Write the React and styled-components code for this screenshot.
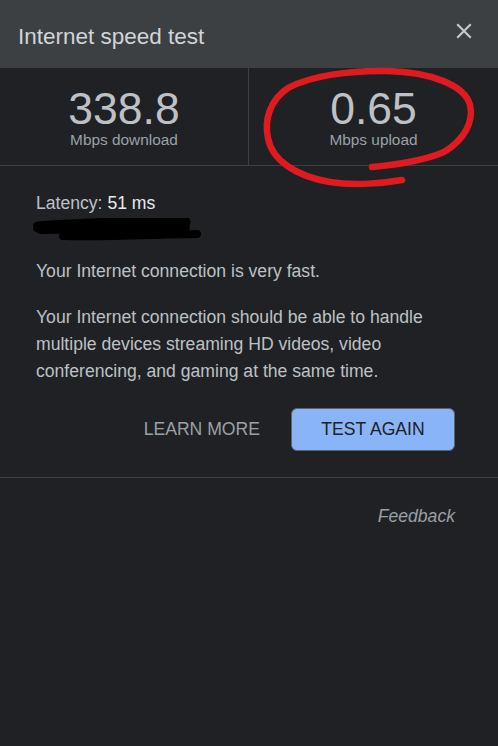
import styled, { createGlobalStyle } from "styled-components"

const GlobalStyle = createGlobalStyle`
    html, body {
        margin: 0;
        padding: 0;
        background: #202124;
    }
    body {
        font-family: "Liberation Sans", Arial, sans-serif;
    }
`
const Card = styled.div`
    position: relative;
    width: 498px;
    height: 746px;
    background: #202124;
    overflow: hidden;
`
const Header = styled.div`
    height: 68px;
    display: flex;
    align-items: center;
    justify-content: space-between;
    padding: 0 26px 0 18px;
    box-sizing: border-box;
    background: #3c4043;
`
const Title = styled.h1`
    margin: 0;
    font-size: 22.5px;
    font-weight: 400;
    color: #d2d5d9;
    padding-top: 6px;
`
const Close = styled.button`
    border: none;
    background: none;
    padding: 0;
    display: flex;
    cursor: pointer;
    margin-top: -6px;
`
const Stats = styled.div`
    display: grid;
    grid-template-columns: 248px 1fr;
    border-bottom: 1px solid #3c4043;
`
const Stat = styled.div`
    display: flex;
    flex-direction: column;
    align-items: center;
    padding: 18px 0 17px;
    border-left: ${p => p.divided ? "1px solid #3c4043" : "none"};
`
const Value = styled.span`
    font-size: 44.5px;
    line-height: 46px;
    color: #bdc1c6;
`
const Unit = styled.span`
    font-size: 15.4px;
    line-height: 16px;
    color: #9aa0a6;
`
const Body = styled.div`
    padding: 24px 36px 0;
`
const Line = styled.div`
    font-size: 17.6px;
    line-height: 26px;
    color: #bdc1c6;
    margin-top: ${p => p.gap || 0}px;
`
const Strong = styled.span`
    color: #e8eaed;
`
const Redacted = styled.div`
    height: 26px;
    display: flex;
    align-items: flex-end;
    margin-left: -3px;
`
const Paragraph = styled.p`
    margin: 20px 0 0;
    font-size: 17.6px;
    line-height: 27px;
    color: #bdc1c6;
`
const Actions = styled.div`
    display: flex;
    justify-content: flex-end;
    align-items: center;
    gap: 15px;
    margin-top: 23px;
    padding-right: 7px;
`
const TextButton = styled.button`
    border: none;
    background: none;
    font-family: inherit;
    font-size: 17.6px;
    color: #9aa0a6;
    padding: 0 16px;
    height: 42px;
    cursor: pointer;
`
const PrimaryButton = styled.button`
    border: 1px solid #5f6368;
    border-radius: 6px;
    background: #8ab4f8;
    font-family: inherit;
    font-size: 17.6px;
    color: #202124;
    height: 43px;
    width: 164px;
    cursor: pointer;
`
const Divider = styled.hr`
    margin: 26px 0 0;
    border: none;
    border-top: 1px solid #3c4043;
`
const Footer = styled.div`
    display: flex;
    justify-content: flex-end;
    padding: 28px 43px 0 0;
`
const Feedback = styled.a`
    font-size: 17.6px;
    font-style: italic;
    color: #9aa0a6;
`
const Markup = styled.svg`
    position: absolute;
    left: 0;
    top: 0;
    pointer-events: none;
`

const CloseIcon = () => (
    <svg width="16" height="16" viewBox="0 0 16 16">
        <path d="M2 2 L14 14 M14 2 L2 14" stroke="#c4c7cb" strokeWidth="2.2" strokeLinecap="square" />
    </svg>
)

const App = () => {
    return (
        <Card>
            <GlobalStyle />
            <Header>
                <Title>Internet speed test</Title>
                <Close aria-label="Close"><CloseIcon /></Close>
            </Header>
            <Stats>
                <Stat>
                    <Value>338.8</Value>
                    <Unit>Mbps download</Unit>
                </Stat>
                <Stat divided>
                    <Value>0.65</Value>
                    <Unit>Mbps upload</Unit>
                </Stat>
            </Stats>
            <Body>
                <Line>Latency: <Strong>51 ms</Strong></Line>
                <Redacted>
                    <svg width="172" height="24" viewBox="0 0 172 24">
                        <path d="M5 9 C40 6 110 4 152 4" stroke="#000" strokeWidth="11" strokeLinecap="round" fill="none" />
                        <path d="M8 11 L152 9" stroke="#000" strokeWidth="10" strokeLinecap="round" />
                        <path d="M30 18 C80 19 130 16 164 16" stroke="#000" strokeWidth="8" strokeLinecap="round" fill="none" />
                    </svg>
                </Redacted>
                <Line gap={16}>Your Internet connection is very fast.</Line>
                <Paragraph>
                    Your Internet connection should be able to handle multiple devices streaming HD videos, video conferencing, and gaming at the same time.
                </Paragraph>
                <Actions>
                    <TextButton>LEARN MORE</TextButton>
                    <PrimaryButton>TEST AGAIN</PrimaryButton>
                </Actions>
            </Body>
            <Divider />
            <Footer>
                <Feedback>Feedback</Feedback>
            </Footer>
            <Markup width="498" height="746" viewBox="0 0 498 746">
                <path
                    d="M372 167 C395 165 425 160 444 152 C464 140 474 122 470 105 C465 85 430 72 388 71 C350 70 310 76 288 88 C270 100 264 120 268 138 C272 160 295 176 330 182 C355 186 385 183 402 180"
                    stroke="#e01b1f"
                    strokeWidth="6.5"
                    strokeLinecap="round"
                    fill="none"
                />
            </Markup>
        </Card>
    )
}

export default App
